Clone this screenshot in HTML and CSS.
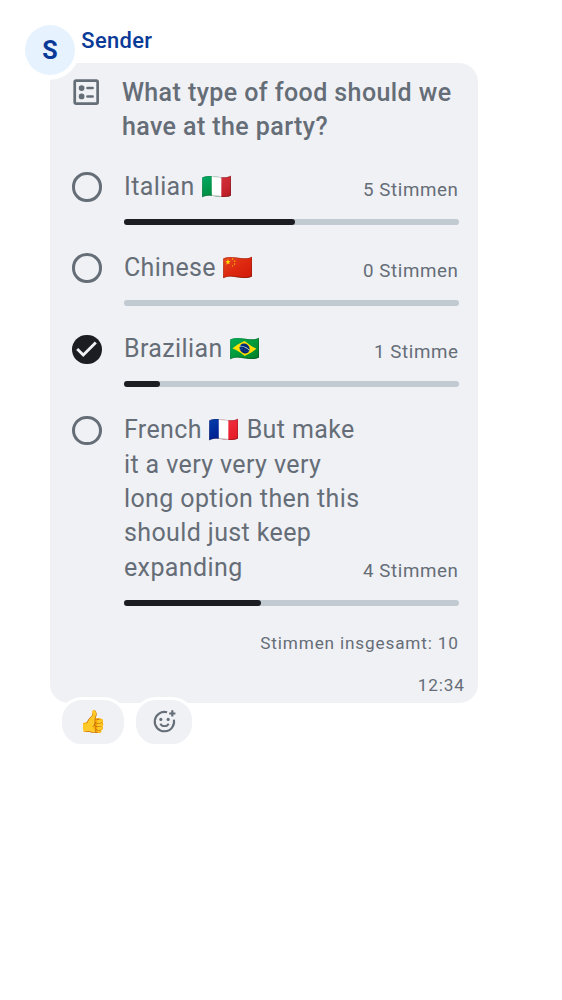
FILE: index.html
```html
<!DOCTYPE html>
<html lang="de">
<head>
<meta charset="utf-8">
<title>Poll</title>
<link rel="stylesheet" href="styles.css">
</head>
<body>
<main class="message">
  <header class="sender">
    <span class="avatar">S</span>
    <span class="sender-name">Sender</span>
  </header>
  <section class="bubble">
    <div class="question">
      <svg class="poll-icon" viewBox="0 0 24 24" fill="none" stroke="currentColor">
        <rect x="4" y="4" width="16" height="16" rx="1" stroke-width="1.9"/>
        <path d="M12.9 9.1h3.6M12.9 15h3.6" stroke-width="1.8" stroke-linecap="round"/>
        <circle cx="8.8" cy="9.1" r="2" fill="currentColor" stroke="none"/>
        <circle cx="8.8" cy="15" r="2" fill="currentColor" stroke="none"/>
      </svg>
      <h1 class="title">What type of food should we have at the party?</h1>
    </div>
    <ul class="options">
      <li class="option">
        <span class="radio"></span>
        <div class="option-body">
          <div class="option-row"><span class="label">Italian 🇮🇹</span><span class="votes">5 Stimmen</span></div>
          <div class="bar"><div class="fill" style="width:170.6px"></div></div>
        </div>
      </li>
      <li class="option">
        <span class="radio"></span>
        <div class="option-body">
          <div class="option-row"><span class="label">Chinese 🇨🇳</span><span class="votes">0 Stimmen</span></div>
          <div class="bar"></div>
        </div>
      </li>
      <li class="option">
        <span class="radio checked"><svg class="check" viewBox="0 0 30 30"><path d="M5.3 14.3l6.2 6.2L24.3 7.7" fill="none" stroke="#f0f1f5" stroke-width="2.9"/></svg></span>
        <div class="option-body">
          <div class="option-row"><span class="label">Brazilian 🇧🇷</span><span class="votes">1 Stimme</span></div>
          <div class="bar"><div class="fill" style="width:36.4px"></div></div>
        </div>
      </li>
      <li class="option">
        <span class="radio"></span>
        <div class="option-body">
          <div class="option-row"><span class="label">French 🇫🇷 But make it a very very very long option then this should just keep expanding</span><span class="votes">4 Stimmen</span></div>
          <div class="bar"><div class="fill" style="width:137.2px"></div></div>
        </div>
      </li>
    </ul>
    <p class="total">Stimmen insgesamt: 10</p>
    <time class="time">12:34</time>
  </section>
  <footer class="reactions">
    <span class="pill pill-thumb"><span class="thumb">👍️</span></span>
    <span class="pill pill-add">
      <svg class="add-icon" viewBox="0 0 24 24" fill="none" stroke="#656d77" stroke-width="2">
        <path d="M14.5 3.2A9.3 9.3 0 1 0 21 10.2"/>
        <path d="M19.5 1.3v6M16.5 4.3h6" stroke-width="2.1"/>
        <path d="M8 14.2c1.6 3 6.4 3 8 0" stroke-width="1.8"/>
        <circle cx="8.5" cy="10" r="1.5" fill="#656d77" stroke="none"/>
        <circle cx="15.5" cy="10" r="1.5" fill="#656d77" stroke="none"/>
      </svg>
    </span>
  </footer>
</main>
</body>
</html>
```
FILE: styles.css
```css
* { box-sizing: border-box; }
body {
  margin: 0;
  background: #fff;
  color: #656d77;
  font-family: Roboto, "Noto Color Emoji", sans-serif;
}
.message { width: 478px; padding: 25px 0 0 25px; }
.sender { display: flex; height: 37.5px; color: #0a3a97; }
.avatar {
  position: relative;
  z-index: 1;
  flex: none;
  width: 50px;
  height: 50px;
  border-radius: 50%;
  background: #e7f2ff;
  box-shadow: 0 0 0 4.7px #fff;
  font-size: 25px;
  font-weight: 700;
  line-height: 51px;
  text-align: center;
}
.sender-name {
  padding-left: 6.3px;
  font-size: 21.9px;
  font-weight: 500;
  line-height: 31px;
  letter-spacing: 0.36px;
}
.bubble {
  display: flex;
  flex-direction: column;
  height: 640.6px;
  margin-left: 25px;
  padding: 12.5px 18.75px 0;
  border-radius: 18.75px;
  background: #f0f1f5;
}
.question { display: flex; gap: 18.75px; }
.poll-icon { flex: none; width: 34.375px; height: 34.375px; }
.title {
  margin: 0;
  padding-top: 1px;
  font-size: 25px;
  font-weight: 500;
  line-height: 34.375px;
  letter-spacing: 0.42px;
}
.options {
  display: flex;
  flex-direction: column;
  gap: 25px;
  margin: 24px 0 0;
  padding: 0;
  list-style: none;
}
.option { display: flex; padding-left: 3.5px; }
.radio {
  flex: none;
  width: 29.4px;
  height: 29.4px;
  margin: 3.5px 22.3px 0 0;
  border: 3px solid #656d77;
  border-radius: 50%;
}
.checked { border: 0; background: #1b1d22; }
.check { display: block; width: 100%; height: 100%; }
.option-body { flex: none; width: 335.2px; }
.option-row { display: flex; justify-content: space-between; align-items: flex-end; padding-top: 0.8px; }
.label {
  width: 238px;
  font-size: 25px;
  line-height: 34.375px;
  letter-spacing: 0.39px;
}
.votes {
  margin-right: 0.6px;
  font-size: 18.75px;
  line-height: 28px;
  letter-spacing: 0.6px;
  white-space: nowrap;
}
.bar {
  height: 6.25px;
  margin-top: 14.8px;
  border-radius: 3px;
  background: #c1c9d1;
}
.fill { height: 100%; border-radius: 3px; background: #1b1d22; }
.total, .time {
  align-self: flex-end;
  margin: 25px 0.5px 0 0;
  font-size: 17.2px;
  line-height: 25px;
  letter-spacing: 0.83px;
}
.time { margin: 17px -5.4px 0 0; }
.reactions { display: flex; gap: 6.2px; margin: -6.6px 0 0 34.4px; }
.pill {
  display: flex;
  align-items: center;
  justify-content: center;
  height: 50px;
  border: 3px solid #fff;
  border-radius: 23px;
  background: #f0f1f5;
}
.pill-thumb { width: 67.5px; }
.pill-add { width: 62.2px; }
.thumb { padding-top: 1px; font-size: 22px; line-height: 1; }
.add-icon { width: 25px; height: 25px; }
```
